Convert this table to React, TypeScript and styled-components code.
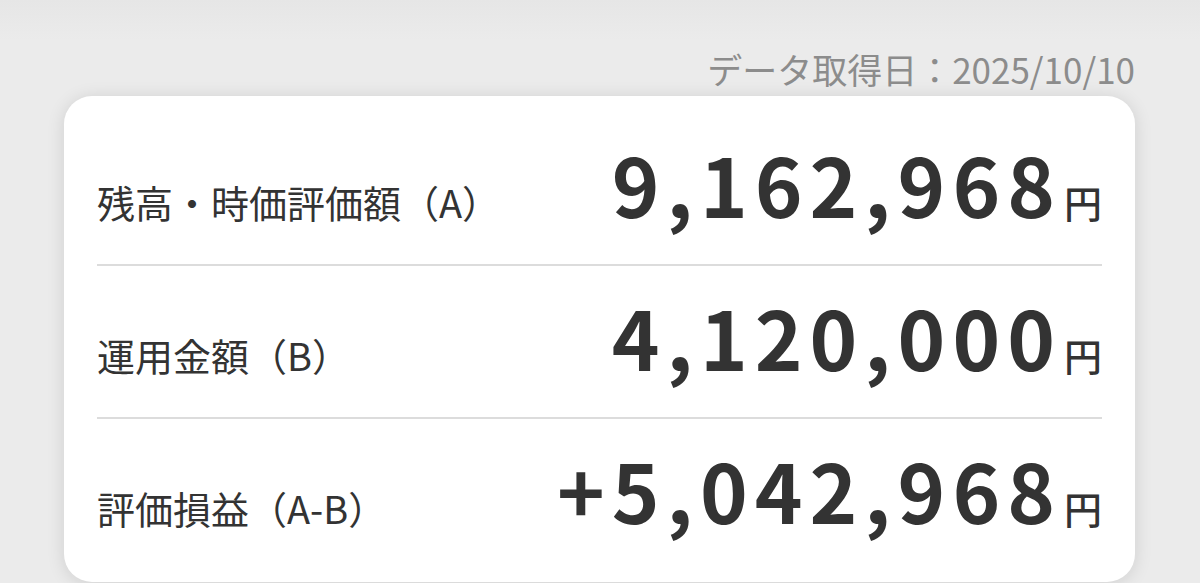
import React from 'react'
import styled, { createGlobalStyle } from 'styled-components'

const GlobalStyle = createGlobalStyle`
  html, body {
    margin: 0;
    padding: 0;
    background: #ebebeb;
    font-family: "Noto Sans CJK JP", "Noto Sans", sans-serif;
    overflow: hidden;
  }
`

const Page = styled.div`
  width: 1200px;
  height: 583px;
  box-sizing: border-box;
  padding: 0 65px 0 64px;
  background: linear-gradient(#e6e6e6 0px, #ebebeb 40px);
`

const DateLine = styled.div`
  padding-top: 45px;
  height: 51px;
  line-height: 48px;
  text-align: right;
  font-size: 35px;
  color: #8c8c8c;
`

const Card = styled.div`
  background: #fff;
  border-radius: 28px;
  box-shadow: 0 2px 18px rgba(0, 0, 0, 0.12);
  padding: 17px 33px 10px 33px;
  height: 486px;
  box-sizing: border-box;
`

const Row = styled.div<{ $last?: boolean }>`
  display: flex;
  align-items: baseline;
  justify-content: space-between;
  height: 153px;
  padding-top: 20px;
  box-sizing: border-box;
  border-bottom: ${p => (p.$last ? 'none' : '2px solid #dcdcdc')};
`

const Label = styled.span`
  font-size: 38px;
  color: #333;
  line-height: 100px;
`

const Amount = styled.span`
  font-size: 81px;
  font-weight: 700;
  color: #333;
  line-height: 100px;
  letter-spacing: 7px;
`

const Yen = styled.span`
  font-size: 38px;
  font-weight: 500;
  color: #333;
  letter-spacing: 0;
  margin-left: 2px;
`

const rows = [
  { label: '残高・時価評価額（A）', value: '9,162,968' },
  { label: '運用金額（B）', value: '4,120,000' },
  { label: '評価損益（A-B）', value: '+5,042,968' },
]

const App = () => {
  return (
    <Page>
      <GlobalStyle />
      <DateLine>データ取得日：2025/10/10</DateLine>
      <Card>
        { rows.map((row, i) => (
          <Row key={ `row-${i}` } $last={ i === rows.length - 1 }>
            <Label>{ row.label }</Label>
            <Amount>
              { row.value }
              <Yen>円</Yen>
            </Amount>
          </Row>
        )) }
      </Card>
    </Page>
  )
}

export default App
